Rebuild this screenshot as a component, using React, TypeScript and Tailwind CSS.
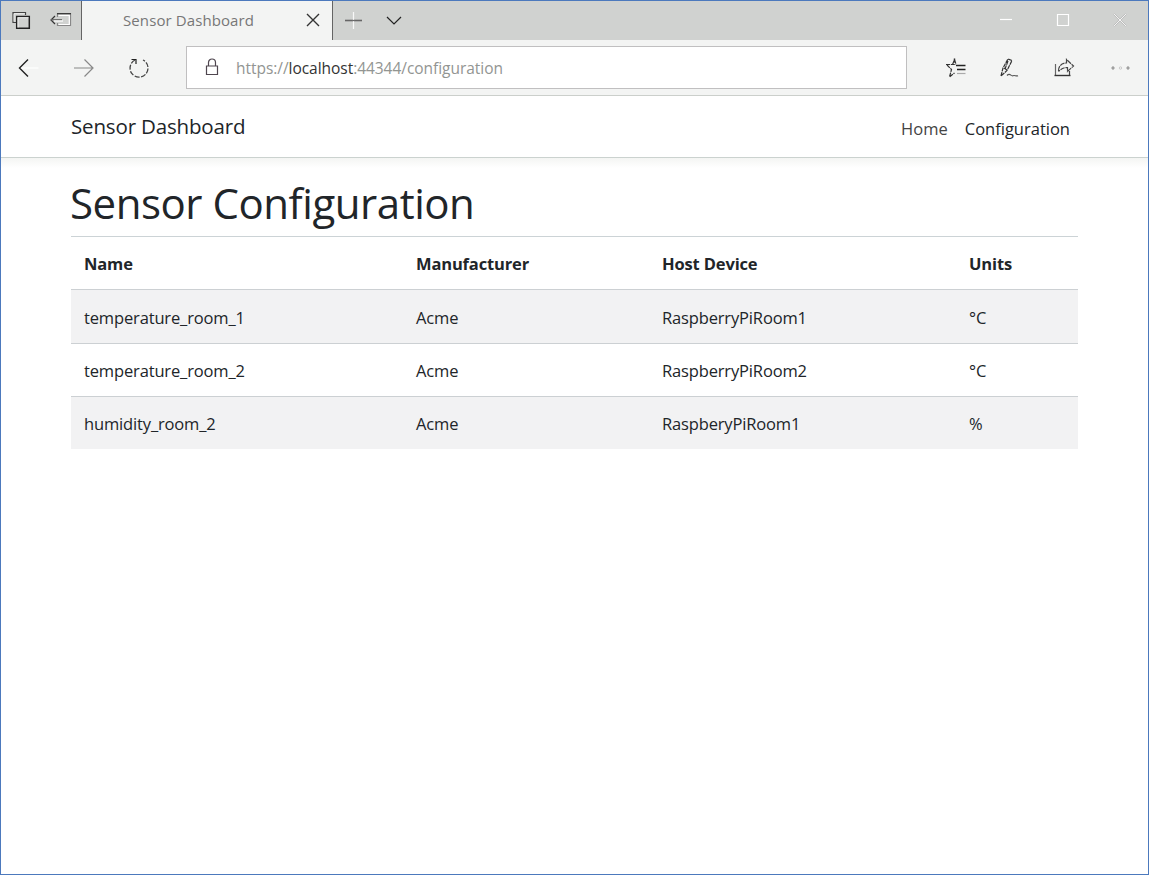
import type { ReactNode } from "react";

type Sensor = { name: string; manufacturer: string; host: string; units: string };

const sensors: Sensor[] = [
  { name: "temperature_room_1", manufacturer: "Acme", host: "RaspberryPiRoom1", units: "°C" },
  { name: "temperature_room_2", manufacturer: "Acme", host: "RaspberryPiRoom2", units: "°C" },
  { name: "humidity_room_2", manufacturer: "Acme", host: "RaspberyPiRoom1", units: "%" },
];

function Icon({ w = 22, h = 22, color = "#222", className = "", children }: { w?: number; h?: number; color?: string; className?: string; children: ReactNode }) {
  return (
    <svg width={w} height={h} viewBox={`0 0 ${w} ${h}`} fill="none" stroke={color} strokeWidth="1.2" className={`block shrink-0 ${className}`}>
      {children}
    </svg>
  );
}

function TabBar() {
  return (
    <div className="flex h-[39px] shrink-0 bg-[#d0d2d0]">
      <div className="flex w-20 pt-[9px] pl-2.5">
        <Icon>
          <path d="M5 12.500H2V2.500h12.500V5" stroke="#444" strokeWidth="1.2" />
          <path d="M3 3.700h11M3 4v7.500" stroke="#f0f0f0" strokeWidth="0.8" />
          <path d="M5.700 6.500h12.600v11.800H5.700z" strokeWidth="1.5" stroke="#222" />
          <path d="M6.500 7.700h11M7 8v9.500" stroke="#f4f4f4" strokeWidth="0.9" />
        </Icon>
        <Icon className="ml-[17px]">
          <path d="M7.5 7V3.5h13v12H7.5V13" stroke="#888" />
          <path d="M8.5 5.5h10.8v9H8.5" stroke="#fff" />
          <path d="M7 3.700h14" stroke="#333" />
          <path d="M5 6 1 10l4 4" stroke="#333" />
          <path d="M1 9.700h11" stroke="#666" />
          <path d="M4 11h9" stroke="#fff" />
        </Icon>
      </div>
      <div className="flex w-[252px] border-x border-[#646464] bg-[#f3f4f3] pt-2">
        <span className="w-[223px] pl-[41px] text-[15px] leading-[22px] tracking-[0.1px] text-[#777]">Sensor Dashboard</span>
        <Icon w={16} h={16} className="mt-[3px]">
          <path d="m2 2 12 12M14 2 2 14" stroke="#333" strokeWidth="1.4" />
        </Icon>
      </div>
      <div className="flex pt-2.5 pl-3">
        <Icon w={18} h={18}>
          <path d="M0 9.5h17" stroke="#666" strokeWidth="1.6" />
          <path d="M8.5 1v17" stroke="#f8f8f8" />
          <path d="M7.500 9.5h2" stroke="#666" />
        </Icon>
        <Icon w={18} h={18} className="ml-[23px]">
          <path d="m1 6 7 7 7-7" stroke="#222" />
        </Icon>
      </div>
      <div className="ml-auto flex pt-2.5 pr-[21px]">
        <Icon w={14} h={18} color="#fff">
          <path d="M1 8.5h12" />
        </Icon>
        <Icon w={14} h={18} color="#fff" className="ml-[43px]">
          <path d="M1.5 3.5h11v11h-11z" />
        </Icon>
        <Icon w={14} h={18} className="ml-[43px]">
          <path d="m1 3 12 12M13 3 1 15" stroke="#b0b0b0" strokeWidth="1.600" />
          <path d="m1 3 12 12M13 3 1 15" stroke="#fafafa" strokeWidth="0.900" />
        </Icon>
      </div>
    </div>
  );
}

function Toolbar() {
  return (
    <div className="flex h-14 shrink-0 items-center border-b border-[#cbcfcb] bg-[#f3f4f3]">
      <Icon className="ml-[17px]">
        <path d="M10 2.5 1.5 11l8.5 8.500" strokeWidth="1.4" />
        <path d="M3.500 11h17" stroke="#fff" />
      </Icon>
      <Icon className="ml-[33px]" color="#888">
        <path d="M1 11h18M11.500 2.500 20 11l-8.500 8.500" />
      </Icon>
      <Icon className="ml-[33px]">
        <path d="M7 3a9 9 0 1 0 8 0" stroke="#444" strokeWidth="1.3" strokeDasharray="5 1.500" />
        <path d="M3.500 2.500H8V7" stroke="#222" />
      </Icon>
      <div className="ml-9 flex h-[43px] w-[721px] items-center border border-[#c0bfc0] bg-white">
        <Icon w={14} h={18} color="#4f464f" className="ml-[18px] mb-px">
          <path d="M1.500 8h11v8.500h-11zM3.500 8V4.500a3.500 3.500 0 0 1 7 0V8" />
        </Icon>
        <span className="ml-[17px] whitespace-nowrap text-[15.500px] leading-6 tracking-[-0.04px] text-[#929592]">
          https://<span className="text-[#333]">localhost</span>:44344/configuration
        </span>
      </div>
      <Icon className="ml-[38px]">
        <path d="M9.500 1.500v4" stroke="#333" strokeWidth="1.5" />
        <path d="M1 7.500h10M2 8l4.500 4.500-2 7.500 5-4M7.500 7.500 9.500 3l1.500 4" stroke="#333" strokeDasharray="4 0.800" />
        <path d="M11 8.500h9.500M12 12.500h8.500" stroke="#222" strokeWidth="1.4" />
        <path d="M12 16.500h8.500" stroke="#aaa" />
      </Icon>
      <Icon className="ml-8">
        <path d="M2 19 4 11 9 2l4 1.500-5 10L2 19M5 11l3 2M9 4l-3 8" stroke="#333" strokeDasharray="4 0.700" />
        <path d="M8 18.500c3-3 4 1 6 .2s3 1 5 0" stroke="#555" />
      </Icon>
      <Icon className="ml-[33px]">
        <path d="M1.500 7v12" stroke="#666" />
        <path d="M.5 18.500h16" stroke="#333" strokeWidth="1.400" />
        <path d="M4.500 14c0-5 3-8 8-8V2.500l7 6.500-6 5.500v-4c-4 0-6 1-9 4M15.500 14v4" stroke="#444" strokeDasharray="5 0.800" />
      </Icon>
      <Icon className="ml-[34px]" color="#777">
        <ellipse cx="3" cy="11" rx="1" ry="1.300" strokeWidth="0.900" />
        <ellipse cx="10.500" cy="11" rx="1.200" ry="1.200" stroke="#c4c4c4" strokeWidth="0.900" />
        <ellipse cx="18" cy="11" rx="1" ry="1.300" strokeWidth="0.900" />
      </Icon>
    </div>
  );
}

export default function App() {
  return (
    <div className="flex h-[875px] w-[1149px] flex-col overflow-hidden border border-[#4c79bd] bg-white font-['Open_Sans','Noto_Sans',sans-serif] text-[#212529]">
      <TabBar />
      <Toolbar />
      <header className="flex h-[62px] shrink-0 items-center justify-between border-b border-[#cbd2cf] pr-[78px] pl-[70px]">
        <span className="pb-0.5 text-[20.5px] leading-8 tracking-[-0.16px]">Sensor Dashboard</span>
        <nav className="flex gap-[17px] pt-1 text-[16.500px] leading-6">
          <a className="text-[#444]">Home</a>
          <a className="text-[#212529]">Configuration</a>
        </nav>
      </header>
      <div className="h-2.5 shrink-0 bg-linear-to-b from-[#f4f5f3] to-white" />
      <main className="mr-[70px] ml-[70px] w-[1007px]">
        <h1 className="-ml-px h-[68px] pt-2.5 text-[42px] leading-[50px] tracking-[-0.46px] whitespace-nowrap">Sensor Configuration</h1>
        <table className="w-full table-fixed border-separate border-spacing-0 text-left text-[16.5px] leading-[26px] tracking-[-0.15px]">
          <colgroup>
            <col className="w-[332px]" />
            <col className="w-[246px]" />
            <col className="w-[307px]" />
            <col />
          </colgroup>
          <thead>
            <tr className="h-[53px]">
              {["Name", "Manufacturer", "Host Device", "Units"].map((h) => (
                <th key={h} className="border-t border-[#ccd3d6] px-[13px] pt-0.5 pb-0 font-bold">{h}</th>
              ))}
            </tr>
          </thead>
          <tbody>
            {sensors.map((s, i) => (
              <tr key={s.name} className={i === 0 ? "h-[54px] bg-[#f2f2f3]" : "h-[53px] odd:bg-[#f2f2f3]"}>
                {[s.name, s.manufacturer, s.host, s.units].map((v, c) => (
                  <td key={c} className="border-t border-[#ccd0d3] px-[13px] pt-0.5 pb-0">{v}</td>
                ))}
              </tr>
            ))}
          </tbody>
        </table>
      </main>
    </div>
  );
}
